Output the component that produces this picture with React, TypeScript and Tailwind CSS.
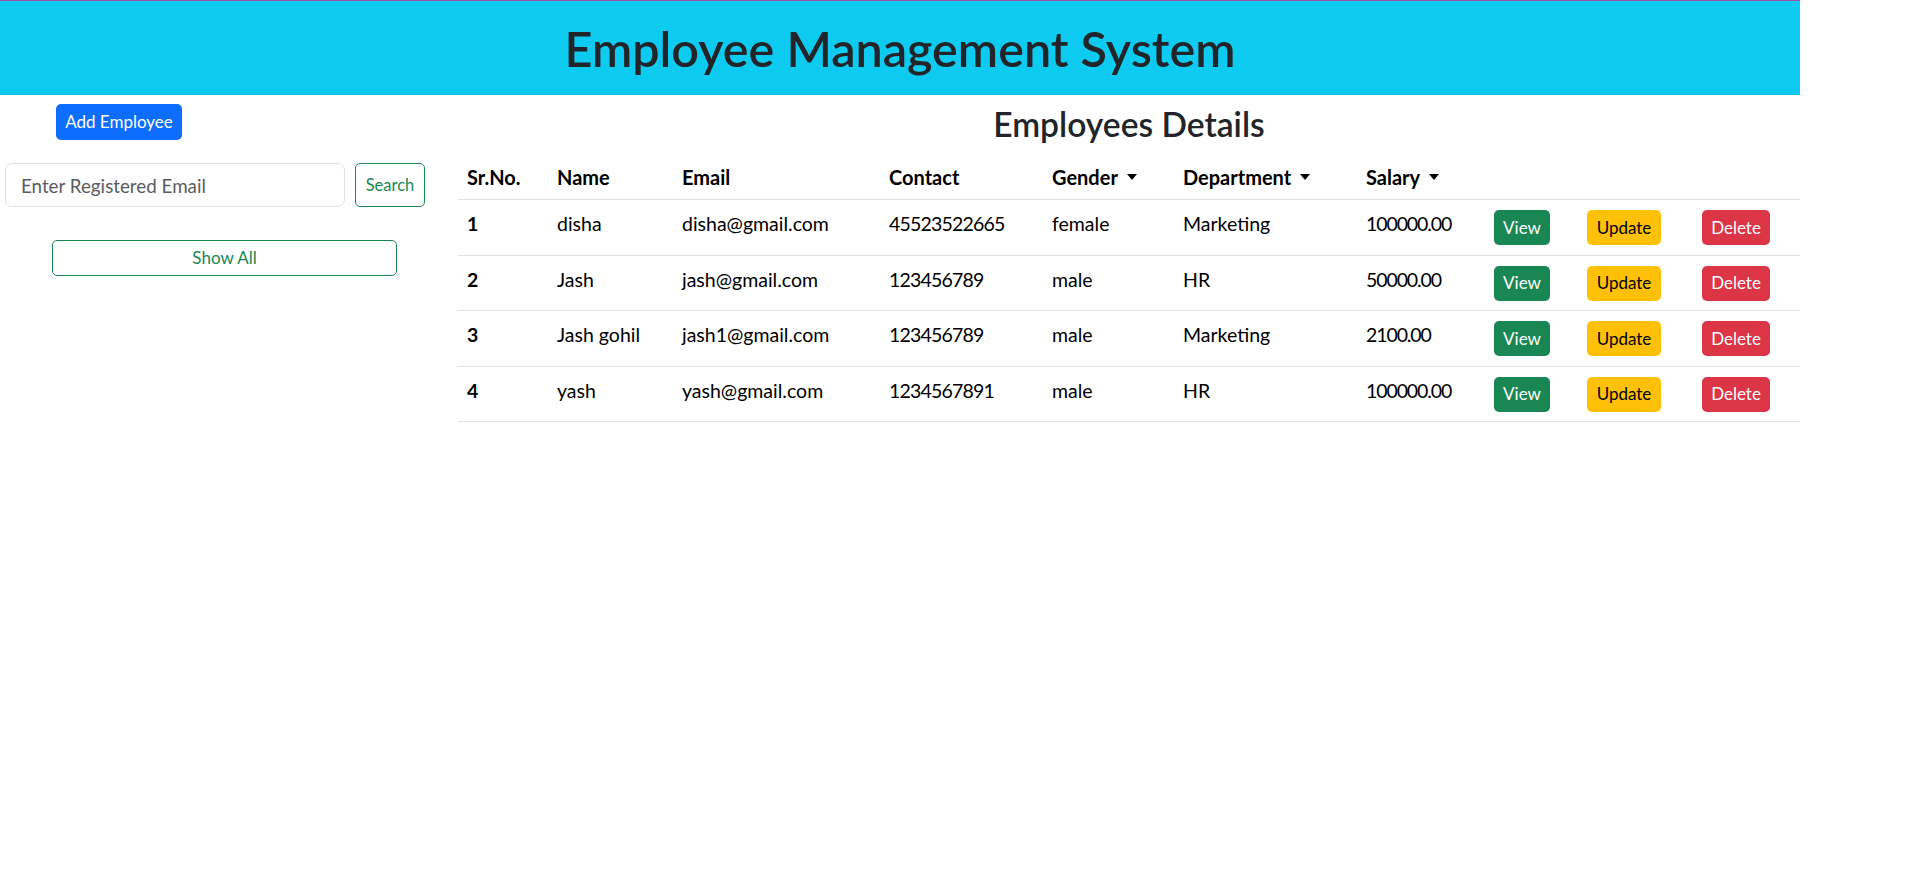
import React from "react";

const rows = [
  { id: 1, name: "disha", email: "disha@gmail.com", contact: "45523522665", gender: "female", dept: "Marketing", salary: "100000.00" },
  { id: 2, name: "Jash", email: "jash@gmail.com", contact: "123456789", gender: "male", dept: "HR", salary: "50000.00" },
  { id: 3, name: "Jash gohil", email: "jash1@gmail.com", contact: "123456789", gender: "male", dept: "Marketing", salary: "2100.00" },
  { id: 4, name: "yash", email: "yash@gmail.com", contact: "1234567891", gender: "male", dept: "HR", salary: "100000.00" },
];

const gridCols =
  "grid grid-cols-[90px_125px_207px_163px_131px_183px_128px_93px_115px_107px]";

function Caret() {
  return (
    <span className="ml-[9px] inline-block h-0 w-0 border-t-[6px] border-x-[5.5px] border-t-black border-x-transparent" />
  );
}

export default function App() {
  return (
    <div className="min-h-screen w-full bg-white font-['Lato',sans-serif] text-[#212529]">
      <div className="w-[1800px]">
        <header className="flex h-[95px] items-center justify-center border-t border-[#a14f9e] bg-[#0dcaf0]">
          <h1 className="text-[48.5px] font-semibold leading-[1.2] text-[#212529]">
            Employee Management System
          </h1>
        </header>

        <div className="flex">
          <aside className="w-[458px] shrink-0">
            <button className="ml-[56px] mt-[9px] flex h-[36px] w-[126px] items-center justify-center rounded-[5px] bg-[#0d6efd] text-[17px] text-white">
              Add Employee
            </button>
            <div className="ml-[5px] mt-[23px] flex gap-[10px]">
              <input
                className="h-[44px] w-[340px] rounded-[7px] border border-[#dee2e6] px-[15px] text-[18.8px] text-[#212529] outline-none placeholder:text-[#595c5f]"
                placeholder="Enter Registered Email"
              />
              <button className="flex h-[44px] w-[70px] items-center justify-center rounded-[5px] border border-[#198754] text-[16.5px] text-[#198754]">
                Search
              </button>
            </div>
            <button className="ml-[52px] mt-[33px] flex h-[36px] w-[345px] items-center justify-center rounded-[5px] border border-[#198754] text-[17px] text-[#198754]">
              Show All
            </button>
          </aside>

          <main className="flex-1">
            <h3 className="mt-[8px] h-[42px] text-center text-[33.6px] font-semibold leading-[42px] text-[#212529]">
              Employees Details
            </h3>
            <div className="mt-[4px] leading-[30px] text-black">
              <div className={`${gridCols} h-[51px] border-b border-[#dee2e6] text-[20px] font-bold`}>
                <div className="flex items-start pl-[9px] pt-[13px]">Sr.No.</div>
                <div className="flex items-start pl-[9px] pt-[13px]">Name</div>
                <div className="flex items-start pl-[9px] pt-[13px]">Email</div>
                <div className="flex items-start pl-[9px] pt-[13px]">Contact</div>
                <div className="flex items-center pl-[9px] pt-[6px]">
                  Gender
                  <Caret />
                </div>
                <div className="flex items-center pl-[9px] pt-[6px]">
                  Department
                  <Caret />
                </div>
                <div className="flex items-center pl-[9px] pt-[6px]">
                  Salary
                  <Caret />
                </div>
                <div />
                <div />
                <div />
              </div>
              {rows.map((r) => (
                <div key={r.id} className={`${gridCols} h-[55.5px] border-b border-[#dee2e6] text-[19.5px]`}>
                  <div className="pl-[9px] pt-[9px] font-bold">{r.id}</div>
                  <div className="pl-[9px] pt-[9px]">{r.name}</div>
                  <div className="pl-[9px] pt-[9px]">{r.email}</div>
                  <div className="pl-[9px] pt-[9px] tracking-[-0.8px]">{r.contact}</div>
                  <div className="pl-[9px] pt-[9px]">{r.gender}</div>
                  <div className="pl-[9px] pt-[9px]">{r.dept}</div>
                  <div className="pl-[9px] pt-[9px] tracking-[-1.1px]">{r.salary}</div>
                  <div className="pl-[9px] pt-[10px]">
                    <button className="flex h-[35px] w-[56px] items-center justify-center rounded-[5px] bg-[#198754] text-[17px] text-white">
                      View
                    </button>
                  </div>
                  <div className="pl-[9px] pt-[10px]">
                    <button className="flex h-[35px] w-[74px] items-center justify-center rounded-[5px] bg-[#ffc107] text-[17px] text-black">
                      Update
                    </button>
                  </div>
                  <div className="pl-[9px] pt-[10px]">
                    <button className="flex h-[35px] w-[68px] items-center justify-center rounded-[5px] bg-[#dc3545] text-[17px] text-white">
                      Delete
                    </button>
                  </div>
                </div>
              ))}
            </div>
          </main>
        </div>
      </div>
    </div>
  );
}
